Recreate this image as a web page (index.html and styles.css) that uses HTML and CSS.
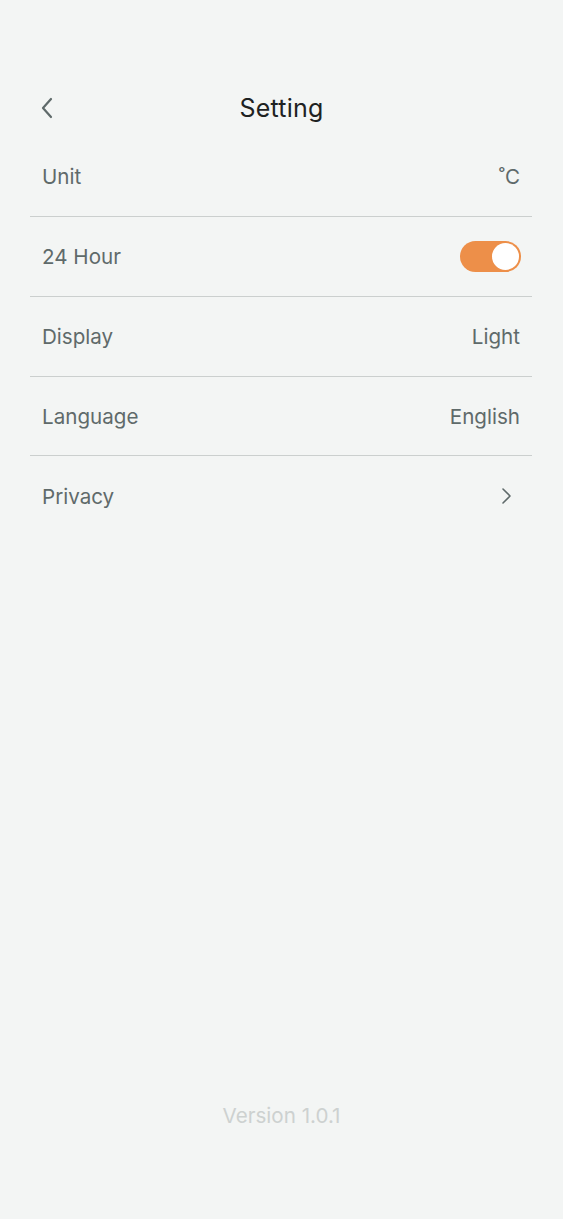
FILE: index.html
```html
<!DOCTYPE html>
<html lang="en">
<head>
<meta charset="utf-8">
<title>Setting</title>
<link rel="stylesheet" href="styles.css">
</head>
<body>
<div class="page">
  <header class="header">
    <button class="back" aria-label="Back">
      <svg width="14" height="22" viewBox="0 0 14 22"><path d="M11 2 L3 11 L11 20" fill="none" stroke="#5f6a6a" stroke-width="2.2" stroke-linecap="round" stroke-linejoin="round"/></svg>
    </button>
    <h1 class="title">Setting</h1>
  </header>
  <ul class="list">
    <li class="row"><span class="label">Unit</span><span class="value">˚C</span></li>
    <li class="row"><span class="label">24 Hour</span><span class="toggle"><span class="knob"></span></span></li>
    <li class="row"><span class="label">Display</span><span class="value">Light</span></li>
    <li class="row"><span class="label">Language</span><span class="value">English</span></li>
    <li class="row last"><span class="label">Privacy</span>
      <svg class="chev" width="12" height="18" viewBox="0 0 12 18"><path d="M3 2 L10 9 L3 16" fill="none" stroke="#5f6a6a" stroke-width="1.6" stroke-linecap="round" stroke-linejoin="round"/></svg>
    </li>
  </ul>
  <div class="version">Version 1.0.1</div>
</div>
</body>
</html>
```
FILE: styles.css
```css
* { box-sizing: border-box; }
html, body { margin: 0; padding: 0; }
body {
  background: #f3f5f4;
  font-family: Inter, "Liberation Sans", Arial, sans-serif;
  color: #5f6a6a;
}
.page {
  min-height: 1219px;
  display: flex;
  flex-direction: column;
}
.header {
  margin-top: 78px;
  height: 59px;
  display: flex;
  align-items: center;
  justify-content: center;
  position: relative;
  padding: 0 30px;
}
.back {
  position: absolute;
  left: 40px;
  top: 50%;
  transform: translateY(-50%);
  background: none;
  border: 0;
  padding: 0;
  width: 14px;
  height: 22px;
  display: flex;
}
.title {
  margin: 0;
  font-size: 25px;
  font-weight: 400;
  color: #1e2222;
  letter-spacing: 0.2px;
}
.list {
  list-style: none;
  margin: 0 31px 0 30px;
  padding: 0;
}
.row {
  height: 80px;
  border-bottom: 1px solid #cbcfce;
  display: flex;
  align-items: center;
  justify-content: space-between;
  padding: 0 12px 0 12px;
  font-size: 20.6px;
}
.row:nth-child(4) { height: 79px; }
.row.last { border-bottom: 0; }
.value { color: #5f6a6a; }
.toggle {
  width: 61px;
  height: 31px;
  border-radius: 16px;
  background: #ed8f49;
  display: flex;
  align-items: center;
  justify-content: flex-end;
  padding-right: 2px;
  margin-right: -1px;
}
.knob {
  width: 27px;
  height: 27px;
  border-radius: 50%;
  background: #fff;
}
.chev { margin-right: 8px; }
.version {
  margin-top: auto;
  padding-bottom: 91px;
  text-align: center;
  font-size: 20.6px;
  line-height: 24px;
  color: #cdd1d0;
}
```
